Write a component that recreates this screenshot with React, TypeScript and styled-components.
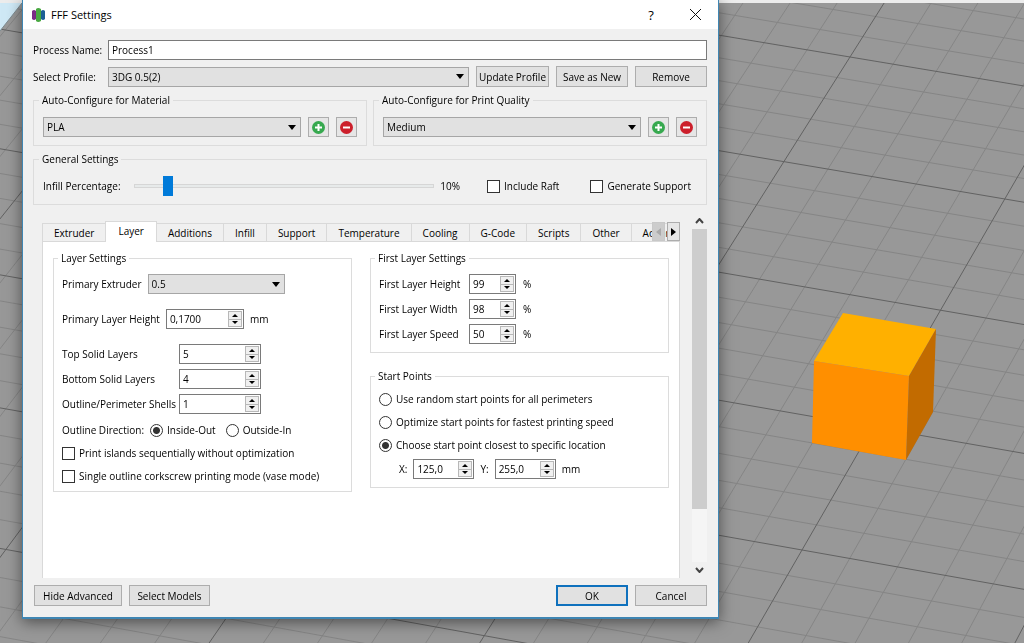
import React, { useId, useState } from "react";
import styled, { createGlobalStyle, css } from "styled-components";

const GlobalStyle = createGlobalStyle`
  *, *::before, *::after { box-sizing: border-box; }
  body {
    margin: 0;
    background: #989898;
    color: #000;
    font: 10px/14px "Open Sans", "Noto Sans", sans-serif;
  }
  button, input, select { font: inherit; color: inherit; margin: 0; border-radius: 0; }
`;

/* ---------- 3D build platform behind the dialog ---------- */

type Point = [number, number];

// Perspective mapping of the unit square onto a quad (four grid intersections).
const makeProjection = ([p0, p1, p2, p3]: Point[]) => {
  const dx1 = p1[0] - p2[0];
  const dx2 = p3[0] - p2[0];
  const dy1 = p1[1] - p2[1];
  const dy2 = p3[1] - p2[1];
  const sx = p0[0] - p1[0] + p2[0] - p3[0];
  const sy = p0[1] - p1[1] + p2[1] - p3[1];
  const det = dx1 * dy2 - dx2 * dy1;
  const g = (sx * dy2 - dx2 * sy) / det;
  const h = (dx1 * sy - sx * dy1) / det;
  return (u: number, v: number): Point => {
    const w = g * u + h * v + 1;
    return [
      ((p1[0] - p0[0] + g * p1[0]) * u + (p3[0] - p0[0] + h * p3[0]) * v + p0[0]) / w,
      ((p1[1] - p0[1] + g * p1[1]) * u + (p3[1] - p0[1] + h * p3[1]) * v + p0[1]) / w,
    ];
  };
};

const project = makeProjection([
  [850, 57],
  [1066, 93],
  [802, 550],
  [565, 508],
]);

const segment = (a: Point, b: Point) => `M${a.join(" ")}L${b.join(" ")}`;
const range = (from: number, to: number) => Array.from({ length: to - from + 1 }, (_, i) => from + i);

const columns = range(-20, 15).map((i) => ({
  major: i % 5 === 0,
  d: segment(project(i / 5, -0.75), project(i / 5, 2)),
}));
const rows = range(-15, 40).map((i) => ({
  major: i % 5 === 0,
  d: segment(project(-5, i / 20), project(3, i / 20)),
}));
const gridLines = [...columns, ...rows];
const pathOf = (major: boolean) =>
  gridLines.filter((l) => l.major === major).map((l) => l.d).join("");

const Scene = styled.svg`
  position: fixed;
  inset: 0;
  width: 100%;
  height: 100%;
`;

const BuildPlatform = () => (
  <Scene viewBox="0 0 1024 643" preserveAspectRatio="xMinYMin slice" aria-hidden="true">
    <rect width="1024" height="643" fill="#989898" />
    <path d={pathOf(false)} stroke="#858585" fill="none" />
    <path d={pathOf(true)} stroke="#626262" fill="none" />
    <path d="M0 3H22L0 31Z" fill="#cfe9f6" />
    <path d="M22 3L0 31" stroke="#7d8a90" fill="none" />
    <rect width="1024" height="3" fill="#ececec" />
    <path d="M843 313L936 329L909 376L814 361Z" fill="#ffb000" />
    <path d="M814 361L909 376L906 460L812 443Z" fill="#ff8f00" />
    <path d="M936 329L933 412L906 460L909 376Z" fill="#c26b00" />
  </Scene>
);

/* ---------- Dialog frame ---------- */

const Desktop = styled.div`
  position: relative;
  display: flex;
  min-height: 100vh;
  padding: 0 305px 24px 22px;
`;

const Dialog = styled.main`
  flex: 1;
  min-width: 690px;
  display: flex;
  flex-direction: column;
  background: #f0f0f0;
  border: solid #3f86b3;
  border-width: 0 1px 2px;
  box-shadow: 0 3px 14px rgba(0, 0, 0, 0.5);
`;

const TitleBar = styled.header`
  display: flex;
  align-items: center;
  gap: 6px;
  height: 29px;
  padding: 0 5px 0 8px;
  background: #fff;
`;

const Title = styled.h1`
  flex: 1;
  margin: 0;
  font-size: 11px;
  font-weight: 400;
`;

const CaptionButton = styled.button`
  display: grid;
  place-items: center;
  width: 36px;
  height: 28px;
  padding: 0;
  border: 0;
  background: none;
  font-size: 13px;
`;

const CaptionButtons = styled.div`
  display: flex;
  gap: 8px;
`;

const Body = styled.div`
  flex: 1;
  display: flex;
  flex-direction: column;
  gap: 6px;
  padding: 11px 11px 11px 10px;
`;

/* ---------- Controls ---------- */

const ProfileGrid = styled.div`
  display: grid;
  grid-template-columns: 75px 1fr;
  align-items: center;
  gap: 6px 0;
`;

const Row = styled.div<{ $gap?: number; $indent?: number }>`
  display: flex;
  align-items: center;
  gap: ${(p) => p.$gap ?? 7}px;
  padding-left: ${(p) => p.$indent ?? 0}px;
`;

const TextInput = styled.input`
  width: 100%;
  height: 20px;
  padding: 0 3px;
  border: 1px solid #7a7a7a;
  background: #fff;
`;

const SelectFrame = styled.span<{ $width?: number }>`
  display: grid;
  align-items: center;
  ${(p) =>
    p.$width
      ? css`
          width: ${p.$width}px;
        `
      : css`
          flex: 1;
        `}
  & > * { grid-area: 1 / 1; }
  & > svg { justify-self: end; margin-right: 5px; pointer-events: none; }
`;

const NativeSelect = styled.select`
  appearance: none;
  width: 100%;
  height: 20px;
  padding: 0 20px 0 3px;
  border: 1px solid #a6a6a6;
  background: #e1e1e1;
`;

const PushButton = styled.button<{ $width: number; $primary?: boolean }>`
  width: ${(p) => p.$width}px;
  height: 21px;
  padding: 0;
  border: ${(p) => (p.$primary ? "2px solid #0f71bd" : "1px solid #adadad")};
  background: #e1e1e1;
  white-space: nowrap;
`;

const IconButton = styled.button`
  display: grid;
  place-items: center;
  width: 21px;
  height: 20px;
  padding: 0;
  border: 1px solid #adadad;
  background: #e6e6e6;
`;

const SpinFrame = styled.span<{ $width: number }>`
  display: flex;
  width: ${(p) => p.$width}px;
  height: 20px;
  padding: 1px;
  border: 1px solid #7a7a7a;
  background: #fff;
`;

const SpinInput = styled.input`
  flex: 1;
  min-width: 0;
  padding: 0 2px;
  border: 0;
  background: none;
`;

const SpinButtons = styled.span`
  display: grid;
  grid-template-rows: 1fr 1fr;
  width: 14px;
  border: 1px solid #b8b8b8;
  background: #b8b8b8;
  gap: 1px;
`;

const SpinButton = styled.button`
  display: grid;
  place-items: center;
  padding: 0;
  border: 0;
  background: #f0f0f0;
`;

const Check = styled.input`
  appearance: none;
  width: 13px;
  height: 13px;
  border: 1px solid #333;
  background: #fff;
  &[type="radio"] { border-radius: 50%; }
  &[type="radio"]:checked { background: radial-gradient(circle, #333 3px, #fff 4px); }
  &[type="checkbox"]:checked { background: #333; box-shadow: inset 0 0 0 2px #fff; }
`;

const Option = styled.label`
  display: flex;
  align-items: center;
  gap: 4px;
  white-space: nowrap;
`;

const OptionPair = styled.div`
  display: flex;
  gap: 31px;
  padding: 0 6px 0 21px;
`;

const Slider = styled.input`
  appearance: none;
  flex: 1;
  min-width: 0;
  height: 20px;
  background: none;
  &::-webkit-slider-runnable-track {
    height: 4px;
    border: 1px solid #d6d6d6;
    background: #e7eaea;
  }
  &::-webkit-slider-thumb {
    appearance: none;
    width: 10px;
    height: 20px;
    margin-top: -9px;
    background: #007ad9;
  }
`;

const SliderField = styled.div`
  flex: 1;
  display: flex;
  align-items: center;
  gap: 13px;
`;

const Group = styled.fieldset<{ $compact?: boolean }>`
  flex: 1;
  min-width: 0;
  margin: 0;
  padding: ${(p) => (p.$compact ? "9px 8px 8px" : "10px 9px 8px")};
  border: 1px solid #dcdcdc;
`;

const Legend = styled.legend`
  height: 14px;
  margin-left: -4px;
  padding: 0 3px;
`;

const Caret = () => (
  <svg width="8" height="5" aria-hidden="true">
    <path d="M0 0H8L4 5Z" />
  </svg>
);

const Select = ({ id, label, value, width }: { id?: string; label?: string; value: string; width?: number }) => (
  <SelectFrame $width={width}>
    <NativeSelect id={id} aria-label={label} defaultValue={value}>
      <option>{value}</option>
    </NativeSelect>
    <Caret />
  </SelectFrame>
);

const Spin = ({ id, value, width }: { id: string; value: string; width: number }) => (
  <SpinFrame $width={width}>
    <SpinInput id={id} defaultValue={value} inputMode="decimal" />
    <SpinButtons>
      <SpinButton aria-label="Increase">
        <svg width="6" height="3"><path d="M0 3L3 0L6 3Z" /></svg>
      </SpinButton>
      <SpinButton aria-label="Decrease">
        <svg width="6" height="3"><path d="M0 0L3 3L6 0Z" /></svg>
      </SpinButton>
    </SpinButtons>
  </SpinFrame>
);

const SignIcon = ({ add }: { add?: boolean }) => (
  <svg width="13" height="13" aria-hidden="true">
    <circle cx="6.500" cy="6.500" r="6.500" fill={add ? "#37a94f" : "#cc1f2b"} />
    <path d={add ? "M3 6.500H10M6.500 3V10" : "M3 6.500H10"} stroke="#fff" strokeWidth="2" />
  </svg>
);

const PresetGroup = ({ title, value }: { title: string; value: string }) => (
  <Group>
    <Legend>{title}</Legend>
    <Row>
      <Select label={title} value={value} />
      <IconButton aria-label="Add"><SignIcon add /></IconButton>
      <IconButton aria-label="Remove"><SignIcon /></IconButton>
    </Row>
  </Group>
);

/* ---------- Tabs and scroll area ---------- */

const ScrollArea = styled.section`
  flex: 1;
  display: flex;
  gap: 12px;
  padding-left: 9px;
`;

const TabArea = styled.div`
  flex: 1;
  min-width: 0;
  display: flex;
  flex-direction: column;
  padding-top: 10px;
`;

const TabBar = styled.div`
  position: relative;
  z-index: 1;
  display: flex;
  align-items: flex-end;
  height: 21px;
  margin-bottom: -1px;
  overflow: hidden;
`;

const Tab = styled.button<{ $active: boolean }>`
  flex: none;
  height: 19px;
  padding: 0 11px;
  border: 1px solid #d9d9d9;
  background: #f0f0f0;
  & + & { margin-left: -1px; }
  ${(p) =>
    p.$active &&
    css`
      height: 21px;
      padding: 0 12px 3px;
      border-bottom: 0;
      background: #fff;
    `}
`;

const TabScroller = styled.div`
  position: absolute;
  top: 1px;
  right: 0;
  display: flex;
  gap: 2px;
`;

const TabScrollButton = styled.button`
  display: grid;
  place-items: center;
  width: 13px;
  height: 19px;
  padding: 0;
  border: 1px solid #adadad;
  background: #e6e6e6;
  &:disabled { border-color: #c8c8c8; background: #ccc; }
`;

const TabPanel = styled.div`
  flex: 1;
  display: grid;
  grid-template-columns: 1fr 1fr;
  align-items: start;
  gap: 18px;
  padding: 9px 10px;
  border: solid #d9d9d9;
  border-width: 1px 1px 0;
  background: #fff;
`;

const Stack = styled.div<{ $gap: number }>`
  display: flex;
  flex-direction: column;
  gap: ${(p) => p.$gap}px;
`;

const FieldGrid = styled.div<{ $label: number }>`
  display: grid;
  grid-template-columns: ${(p) => p.$label}px auto;
  align-items: center;
  gap: 5px 0;
`;

const ScrollBar = styled.div`
  display: flex;
  flex-direction: column;
  width: 15px;
  margin-top: 2px;
  background: #f5f5f5;
`;

const ScrollArrow = styled.button`
  display: grid;
  place-items: center;
  height: 16px;
  padding: 0;
  border: 0;
  background: #f0f0f0;
`;

const ScrollTrack = styled.div`
  flex: 1;
`;

const ScrollThumb = styled.div`
  height: 84%;
  background: #cdcdcd;
`;

const Footer = styled.footer`
  display: flex;
  gap: 7px;
  padding: 1px 0 0 1px;
`;

const Spacer = styled.span`
  flex: 1;
`;

const TABS = [
  "Extruder", "Layer", "Additions", "Infill", "Support", "Temperature",
  "Cooling", "G-Code", "Scripts", "Other", "Advanced",
];

const LayerSettings = () => {
  const id = useId();
  return (
    <Group $compact>
      <Legend>Layer Settings</Legend>
      <Stack $gap={15}>
        <Row $gap={6}>
          <label htmlFor={id + "ext"}>Primary Extruder</label>
          <Select id={id + "ext"} value="0.5" width={137} />
        </Row>
        <Row $gap={6}>
          <label htmlFor={id + "height"}>Primary Layer Height</label>
          <Spin id={id + "height"} value="0,1700" width={78} />
          mm
        </Row>
        <Stack $gap={9}>
          <FieldGrid $label={117}>
            <label htmlFor={id + "top"}>Top Solid Layers</label>
            <Spin id={id + "top"} value="5" width={82} />
            <label htmlFor={id + "bottom"}>Bottom Solid Layers</label>
            <Spin id={id + "bottom"} value="4" width={82} />
            <label htmlFor={id + "shells"}>Outline/Perimeter Shells</label>
            <Spin id={id + "shells"} value="1" width={82} />
          </FieldGrid>
          <Row $gap={6} role="radiogroup" aria-labelledby={id + "dir"}>
            <span id={id + "dir"}>Outline Direction:</span>
            <Row $gap={10}>
              <Option><Check type="radio" name="direction" defaultChecked />Inside-Out</Option>
              <Option><Check type="radio" name="direction" />Outside-In</Option>
            </Row>
          </Row>
          <Option><Check type="checkbox" />Print islands sequentially without optimization</Option>
          <Option><Check type="checkbox" />Single outline corkscrew printing mode (vase mode)</Option>
        </Stack>
      </Stack>
    </Group>
  );
};

const FirstLayerSettings = () => {
  const id = useId();
  return (
    <Group $compact>
      <Legend>First Layer Settings</Legend>
      <FieldGrid $label={90}>
        <label htmlFor={id + "h"}>First Layer Height</label>
        <Row><Spin id={id + "h"} value="99" width={47} />%</Row>
        <label htmlFor={id + "w"}>First Layer Width</label>
        <Row><Spin id={id + "w"} value="98" width={47} />%</Row>
        <label htmlFor={id + "s"}>First Layer Speed</label>
        <Row><Spin id={id + "s"} value="50" width={47} />%</Row>
      </FieldGrid>
    </Group>
  );
};

const StartPoints = () => {
  const id = useId();
  return (
    <Group $compact>
      <Legend>Start Points</Legend>
      <Stack $gap={7}>
        <Stack $gap={9}>
          <Option><Check type="radio" name="start" />Use random start points for all perimeters</Option>
          <Option><Check type="radio" name="start" />Optimize start points for fastest printing speed</Option>
          <Option><Check type="radio" name="start" defaultChecked />Choose start point closest to specific location</Option>
        </Stack>
        <Row $gap={6} $indent={20}>
          <label htmlFor={id + "x"}>X:</label>
          <Spin id={id + "x"} value="125,0" width={61} />
          <label htmlFor={id + "y"}>Y:</label>
          <Spin id={id + "y"} value="255,0" width={61} />
          mm
        </Row>
      </Stack>
    </Group>
  );
};

export default function App() {
  const id = useId();
  const [tab, setTab] = useState("Layer");
  const [infill, setInfill] = useState(10);
  return (
    <>
      <GlobalStyle />
      <BuildPlatform />
      <Desktop>
        <Dialog>
          <TitleBar>
            <svg width="14" height="16" aria-hidden="true">
              <path d="M1 4Q3 2 5 4V12Q3 14 1 12Z" fill="#7b2a86" />
              <path d="M10 4Q12 2 14 4V12Q12 14 10 12Z" fill="#1c5f96" />
              <path d="M5 2Q7 0 10 2V14Q7 16 5 14Z" fill="#49a942" />
            </svg>
            <Title>FFF Settings</Title>
            <CaptionButtons>
              <CaptionButton aria-label="Help">?</CaptionButton>
              <CaptionButton aria-label="Close">
                <svg width="11" height="11"><path d="M0 0L11 11M11 0L0 11" stroke="#111" /></svg>
              </CaptionButton>
            </CaptionButtons>
          </TitleBar>
          <Body>
            <ProfileGrid>
              <label htmlFor={id + "name"}>Process Name:</label>
              <TextInput id={id + "name"} defaultValue="Process1" />
              <label htmlFor={id + "profile"}>Select Profile:</label>
              <Row>
                <Select id={id + "profile"} value="3DG 0.5(2)" />
                <PushButton $width={73}>Update Profile</PushButton>
                <PushButton $width={72}>Save as New</PushButton>
                <PushButton $width={72}>Remove</PushButton>
              </Row>
            </ProfileGrid>
            <Row $gap={6}>
              <PresetGroup title="Auto-Configure for Material" value="PLA" />
              <PresetGroup title="Auto-Configure for Print Quality" value="Medium" />
            </Row>
            <Row>
              <Group>
                <Legend>General Settings</Legend>
                <Row $gap={6}>
                  <SliderField>
                    <label htmlFor={id + "infill"}>Infill Percentage:</label>
                    <Slider
                      id={id + "infill"}
                      type="range"
                      value={infill}
                      onChange={(e) => setInfill(Number(e.target.value))}
                    />
                  </SliderField>
                  <output htmlFor={id + "infill"}>{infill}%</output>
                  <OptionPair>
                    <Option><Check type="checkbox" />Include Raft</Option>
                    <Option><Check type="checkbox" />Generate Support</Option>
                  </OptionPair>
                </Row>
              </Group>
            </Row>
            <ScrollArea>
              <TabArea>
                <TabBar role="tablist">
                  {TABS.map((name) => (
                    <Tab key={name} role="tab" aria-selected={tab === name} $active={tab === name} onClick={() => setTab(name)}>
                      {name}
                    </Tab>
                  ))}
                  <TabScroller>
                    <TabScrollButton aria-label="Scroll tabs left" disabled>
                      <svg width="5" height="8"><path d="M5 0L0 4L5 8Z" fill="#aaa" /></svg>
                    </TabScrollButton>
                    <TabScrollButton aria-label="Scroll tabs right">
                      <svg width="5" height="8"><path d="M0 0L5 4L0 8Z" /></svg>
                    </TabScrollButton>
                  </TabScroller>
                </TabBar>
                <TabPanel role="tabpanel">
                  <LayerSettings />
                  <Stack $gap={16}>
                    <FirstLayerSettings />
                    <StartPoints />
                  </Stack>
                </TabPanel>
              </TabArea>
              <ScrollBar>
                <ScrollArrow aria-label="Scroll up">
                  <svg width="9" height="6"><path d="M1 5L4.500 1L8 5" stroke="#444" strokeWidth="2" fill="none" /></svg>
                </ScrollArrow>
                <ScrollTrack><ScrollThumb /></ScrollTrack>
                <ScrollArrow aria-label="Scroll down">
                  <svg width="9" height="6"><path d="M1 1L4.500 5L8 1" stroke="#444" strokeWidth="2" fill="none" /></svg>
                </ScrollArrow>
              </ScrollBar>
            </ScrollArea>
            <Footer>
              <PushButton $width={88}>Hide Advanced</PushButton>
              <PushButton $width={81}>Select Models</PushButton>
              <Spacer />
              <PushButton $width={72} $primary>OK</PushButton>
              <PushButton $width={72}>Cancel</PushButton>
            </Footer>
          </Body>
        </Dialog>
      </Desktop>
    </>
  );
}
